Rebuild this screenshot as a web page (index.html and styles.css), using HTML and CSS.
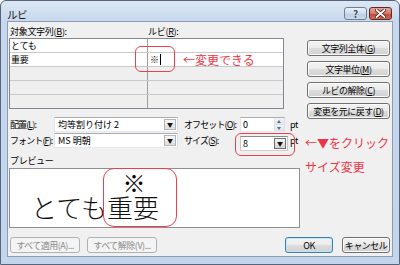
FILE: index.html
```html
<!DOCTYPE html>
<html lang="ja">
<head>
<meta charset="utf-8">
<title>ルビ</title>
<link rel="stylesheet" href="styles.css">
</head>
<body>
<div class="window">
  <div class="titlebar">
    <span class="title">ルビ</span>
    <div class="caps">
      <span class="cbtn help">?</span>
      <span class="cbtn close"><svg width="11" height="9" viewBox="0 0 11 9"><path d="M1.5 1 L9.5 8 M9.5 1 L1.5 8" stroke="#3a1410" stroke-width="3.4" stroke-linecap="round"/><path d="M1.5 1 L9.5 8 M9.5 1 L1.5 8" stroke="#fff" stroke-width="1.8" stroke-linecap="round"/></svg></span>
    </div>
  </div>
  <div class="client">
    <div class="main">
      <div class="leftcol">
        <div class="hdr"><span class="h1">対象文字列(<u>B</u>):</span><span class="h2">ルビ(<u>R</u>):</span></div>
        <div class="grid">
          <div class="row white"><span class="c1">とても</span><span class="c2"></span></div>
          <div class="row white"><span class="c1">重要</span><span class="c2 ruby">※<i class="caret"></i></span></div>
          <div class="row"><span class="c1"></span><span class="c2"></span></div>
          <div class="row"><span class="c1"></span><span class="c2"></span></div>
          <div class="row last"><span class="c1"></span><span class="c2"></span></div>
        </div>
        <div class="frow r1">
          <span class="flbl">配置(<u>L</u>):</span>
          <span class="sel"><span class="val">均等割り付け 2</span><span class="arrow">▼</span></span>
          <span class="flbl2">オフセット(<u>O</u>):</span>
          <span class="spin"><span class="val">0</span><span class="spinbtns"><span class="sb up"></span><span class="sb down"></span></span></span>
          <span class="pt p1">pt</span>
        </div>
        <div class="frow r2">
          <span class="flbl">フォント(<u>F</u>):</span>
          <span class="sel"><span class="val">MS 明朝</span><span class="arrow">▼</span></span>
          <span class="flbl2">サイズ(<u>S</u>):</span>
          <span class="combo"><span class="val">8</span><span class="arrow dark">▼</span></span>
          <span class="pt p2">pt</span>
        </div>
        <div class="plabel">プレビュー</div>
        <div class="preview">
          <span class="pv">とても</span>
          <span class="pvruby"><span class="rt">※</span><span class="pv">重要</span></span>
        </div>
      </div>
      <div class="rightcol">
        <span class="btn">文字列全体(<u>G</u>)</span>
        <span class="btn">文字単位(<u>M</u>)</span>
        <span class="btn">ルビの解除(<u>C</u>)</span>
        <span class="btn">変更を元に戻す(<u>D</u>)</span>
      </div>
    </div>
    <div class="bottom">
      <span class="btn wide disabled">すべて適用(A)...</span>
      <span class="btn wide disabled">すべて解除(V)...</span>
      <span class="btn small default ok">OK</span>
      <span class="btn small">キャンセル</span>
    </div>

    <span class="mark m1"></span>
    <span class="note n1">←変更できる</span>
    <span class="mark m2"></span>
    <span class="note n2">←▼をクリック</span>
    <span class="note n3">サイズ変更</span>
    <span class="mark m3"></span>
  </div>
</div>
</body>
</html>
```

FILE: styles.css
```css
html, body {
  margin: 0;
  padding: 0;
}
body {
  width: 400px;
  height: 265px;
  overflow: hidden;
  background: #ffffff;
  font-family: "Noto Sans CJK JP", "Noto Sans", sans-serif;
  color: #000;
}
u { text-decoration: underline; text-underline-offset: 1px; }

.window {
  width: 400px;
  height: 265px;
  box-sizing: border-box;
  border: 1px solid #56657c;
  border-radius: 6px 6px 0 0;
  background: linear-gradient(#dce7f4, #c7d8ed 20px, #c3d5eb);
  padding: 0 6px 7px 6px;
  display: flex;
  flex-direction: column;
}

.titlebar {
  height: 20px;
  margin: 0 -6px;
  padding-left: 6px;
  display: flex;
  align-items: flex-start;
}
.title {
  font-size: 10.5px;
  line-height: 12px;
  margin-top: 8px;
  color: #1a1a1a;
  letter-spacing: -0.5px;
}
.caps {
  margin-left: auto;
  margin-right: 7px;
  margin-top: 6px;
  display: flex;
  gap: 2px;
}
.cbtn {
  width: 23px;
  height: 13px;
  box-sizing: border-box;
  border: 1px solid #6f7f96;
  border-radius: 3px;
  display: flex;
  align-items: center;
  justify-content: center;
}
.help {
  background: linear-gradient(#e9f0f9, #cfdcec 50%, #bccde3 51%, #c9d8ea);
  font-size: 10px;
  font-weight: bold;
  color: #3b4a60;
  line-height: 10px;
  text-shadow: 0 0 1px #fff;
}
.close {
  border-color: #5d2a24;
  background: linear-gradient(#e6a59c, #d5776a 50%, #c54431 51%, #d06a55);
}

.client {
  flex: 1;
  position: relative;
  background: #f0f0f0;
  border: 1px solid #8d9db5;
  display: flex;
  flex-direction: column;
  font-size: 9px;
  letter-spacing: -0.3px;
}

.main {
  display: flex;
  padding-top: 3px;
}
.leftcol {
  margin-left: 1px;
  width: 291px;
  display: flex;
  flex-direction: column;
}
.hdr {
  height: 13px;
  line-height: 13px;
  display: flex;
}
.h1 {
  width: 139px;
  padding-left: 1px;
  box-sizing: border-box;
}

.grid {
  width: 275px;
  height: 71px;
  box-sizing: border-box;
  border: 1px solid #828790;
  display: flex;
  flex-direction: column;
}
.row {
  height: 13px;
  border-bottom: 1px solid #c9c9c9;
  display: flex;
  background: #efefef;
  line-height: 13px;
}
.row.last { border-bottom: none; }
.row.white { background: #ffffff; }
.row .c1 {
  width: 136px;
  border-right: 1px solid #9d9d9d;
  padding-left: 1px;
}
.c2 {
  flex: 1;
  padding-left: 2px;
  display: flex;
  align-items: center;
}
.caret {
  display: inline-block;
  width: 1px;
  height: 11px;
  background: #000;
  margin-left: 1px;
}

.frow {
  height: 15px;
  display: flex;
  align-items: center;
}
.r1 { margin-top: 8px; }
.r2 { margin-top: 1px; }
.flbl {
  width: 45px;
  padding-left: 1px;
  box-sizing: border-box;
  white-space: nowrap;
  letter-spacing: -0.9px;
}
.sel, .spin, .combo {
  height: 15px;
  box-sizing: border-box;
  background: #fff;
  border: 1px solid #abadb3;
  border-color: #abadb3 #dbdfe6 #e3e9ef #e2e3ea;
  display: flex;
  align-items: center;
  letter-spacing: 0;
}
.sel { width: 124px; }
.val {
  flex: 1;
  padding-left: 3px;
  line-height: 13px;
}
.arrow {
  width: 12px;
  height: 11px;
  margin-right: 1px;
  box-sizing: border-box;
  border: 1px solid #b5b5b5;
  background: linear-gradient(#f6f6f6, #dedede);
  font-size: 6px;
  line-height: 9px;
  text-align: center;
  color: #111;
}
.arrow.dark {
  border-color: #707070;
  background: linear-gradient(#f2f2f2, #d6d6d6);
}
.flbl2 {
  margin-left: 6px;
  width: 56px;
  white-space: nowrap;
  letter-spacing: -0.9px;
}
.spin { width: 45px; }
.spin .val { padding-left: 2px; }
.spinbtns {
  width: 9px;
  height: 13px;
  display: flex;
  flex-direction: column;
  border-left: 1px solid #e4e4e4;
}
.sb {
  flex: 1;
  background: linear-gradient(#f2f4f7, #dde3ea);
  position: relative;
}
.sb::after {
  content: "";
  position: absolute;
  left: 2px;
  top: 2px;
  border-left: 2.5px solid transparent;
  border-right: 2.5px solid transparent;
}
.sb.up::after { border-bottom: 3px solid #5a6e8c; }
.sb.down::after { border-top: 3px solid #5a6e8c; }
.combo {
  width: 48px;
  align-self: flex-start;
  margin-top: 3px;
  border-color: #8a8a8a #c8c8c8 #d0d0d0 #c8c8c8;
}
.combo .val { padding-left: 2px; }
.pt { line-height: 13px; }
.p1 { margin-left: 5px; }
.p2 { margin-left: 2px; }

.plabel {
  margin-top: 6px;
  height: 13px;
  line-height: 13px;
  padding-left: 1px;
}
.preview {
  margin-top: 1px;
  height: 60px;
  box-sizing: border-box;
  border: 1px solid #8f9092;
  background: #fff;
  display: flex;
  align-items: flex-end;
  padding: 0 0 7px 21px;
  letter-spacing: 0;
}
.pv {
  font-size: 26px;
  line-height: 26px;
  font-weight: 300;
  color: #111;
}
.pvruby {
  display: flex;
  flex-direction: column;
  align-items: center;
}
.rt {
  font-size: 23px;
  line-height: 20px;
  margin-bottom: 2px;
  font-weight: 300;
  padding-left: 2px;
}

.rightcol {
  margin-left: 7px;
  margin-top: 15px;
  width: 83px;
  display: flex;
  flex-direction: column;
  gap: 5px;
}
.btn {
  height: 16px;
  box-sizing: border-box;
  border: 1px solid #707070;
  border-radius: 3px;
  background: linear-gradient(#f3f3f3, #ebebeb 50%, #dddddd 51%, #d1d1d1);
  box-shadow: inset 0 0 0 1px #fbfbfb;
  display: flex;
  align-items: center;
  justify-content: center;
  line-height: 13px;
  white-space: nowrap;
  letter-spacing: -0.5px;
}

.bottom {
  margin-top: 9px;
  display: flex;
  padding-left: 2px;
  padding-right: 2px;
}
.wide { width: 70px; margin-right: 7px; }
.small { width: 48px; }
.disabled {
  border-color: #adb2b5;
  background: #f4f4f4;
  box-shadow: none;
  color: #8a8a8a;
}
.ok {
  margin-left: auto;
  margin-right: 9px;
}
.default {
  border-color: #3c7fb1;
  box-shadow: inset 0 0 0 1px #bfe6f8;
}

.mark {
  position: absolute;
  border: 1px solid #e8404f;
  box-sizing: border-box;
}
.m1 { left: 127px; top: 24px; width: 40px; height: 26px; border-radius: 6px; }
.m2 { left: 227px; top: 111px; width: 60px; height: 23px; border-radius: 6px; }
.m3 { left: 95px; top: 146px; width: 74px; height: 59px; border-radius: 11px; }
.note {
  position: absolute;
  font-size: 12px;
  line-height: 14px;
  color: #ec3446;
  white-space: nowrap;
  letter-spacing: 0;
}
.n1 { left: 175px; top: 31px; }
.n2 { left: 297px; top: 114px; }
.n3 { left: 297px; top: 138px; }
```
